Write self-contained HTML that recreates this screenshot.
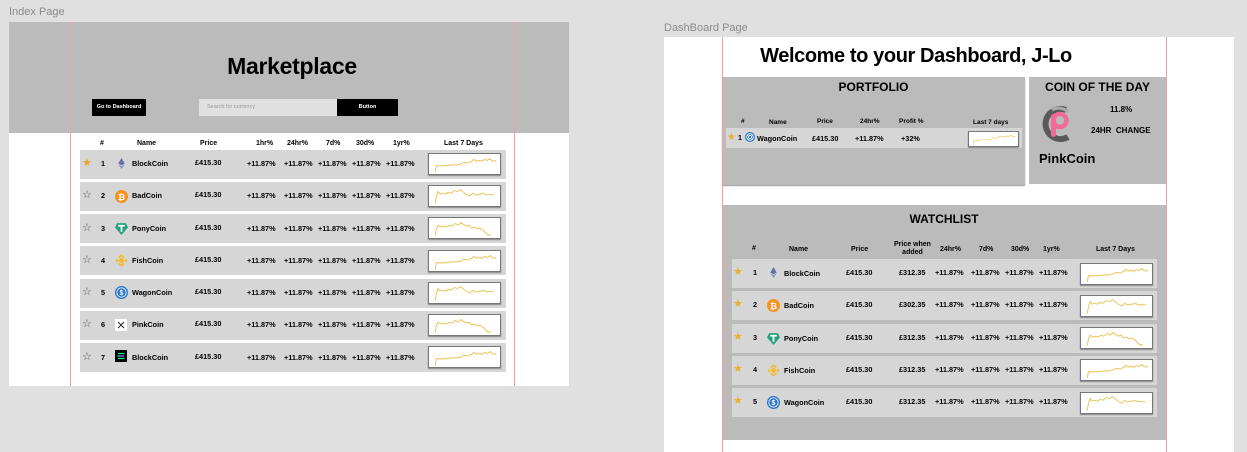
<!DOCTYPE html>
<html><head><meta charset="utf-8"><style>
*{margin:0;padding:0;box-sizing:border-box}
body{width:1247px;height:452px;background:#e0e0e0;position:relative;overflow:hidden;font-family:"Liberation Sans",Arial,sans-serif;color:#000}
.a{position:absolute}
.lbl{font-size:11px;color:#8a8a8a}
.t{position:absolute;font-size:7px;font-weight:bold;white-space:nowrap;line-height:1}
.col{position:absolute;font-size:7.3px;font-weight:bold;white-space:nowrap;line-height:32.3px}
.row{position:absolute;background:#d6d6d6}
.sp{position:absolute;background:#fff;border:1px solid #777;box-shadow:0 1px 1px #888}
.sp svg{display:block;width:100%;height:100%}
.red{position:absolute;width:1px;background:#f4a0a0}
.star{position:absolute;font-size:11px;line-height:1}
.ic{position:absolute;width:11px;height:11px}
</style></head><body>
<svg width="0" height="0" style="position:absolute"><defs>
<symbol id="s1" viewBox="0 0 72 22"><polyline fill="none" stroke="#e8b838" stroke-width="0.9" points="4,20 5,13 14,13 22,12 28,12 32,11 36,9 40,10 44,8 46,6 49,8 52,7 55,8 58,6 61,7 64,5 66,7 69,8 71,7"/></symbol>
<symbol id="s2" viewBox="0 0 72 22"><polyline fill="none" stroke="#e8b838" stroke-width="0.9" points="4,19 5,12 7,6 9,9 12,8 15,9 18,7 21,8 25,5 28,6 32,4 35,7 38,9 42,11 45,8 48,10 51,9 54,9 57,8 60,10 63,9 66,10 68,9"/></symbol>
<symbol id="s3" viewBox="0 0 72 22"><polyline fill="none" stroke="#e8b838" stroke-width="0.9" points="4,19 5,12 7,8 10,10 13,9 16,10 19,8 22,9 26,6 29,8 32,5 35,7 38,9 41,8 44,11 47,10 50,12 53,11 56,13 59,16 62,19 65,18"/></symbol>
</defs></svg>

<!-- INDEX PAGE -->
<div class="a lbl" style="left:9px;top:6px">Index Page</div>
<div class="a" style="left:9px;top:22px;width:560px;height:364px;background:#fff"></div>
<div class="a" style="left:9px;top:22px;width:560px;height:111px;background:#bbbbbb"></div>
<div class="a" style="left:9px;top:53px;width:566px;text-align:center;font-size:23px;font-weight:bold;letter-spacing:-0.3px">Marketplace</div>
<div class="a" style="left:92px;top:99px;width:54px;height:17px;background:#000;color:#fff;font-size:5.5px;font-weight:bold;text-align:center;line-height:17px">Go to Dashboard</div>
<div class="a" style="left:199px;top:99px;width:138px;height:17px;background:#e0e0e0;color:#999;font-size:5.5px;line-height:17px;padding-left:8px">Search for currency</div>
<div class="a" style="left:337px;top:99px;width:61px;height:17px;background:#000;color:#fff;font-size:5.5px;font-weight:bold;text-align:center;line-height:17px">Button</div>

<div class="t" style="left:100px;top:140px">#</div>
<div class="t" style="left:137px;top:140px">Name</div>
<div class="t" style="left:200px;top:140px">Price</div>
<div class="t" style="left:256px;top:140px">1hr%</div>
<div class="t" style="left:287px;top:140px">24hr%</div>
<div class="t" style="left:326px;top:140px">7d%</div>
<div class="t" style="left:356px;top:140px">30d%</div>
<div class="t" style="left:393px;top:140px">1yr%</div>
<div class="t" style="left:444px;top:140px">Last 7 Days</div>

<div class="row" style="left:80px;top:150px;width:426px;height:29px"></div>
<div class="row" style="left:80px;top:182px;width:426px;height:29px"></div>
<div class="row" style="left:80px;top:214px;width:426px;height:29px"></div>
<div class="row" style="left:80px;top:246px;width:426px;height:29px"></div>
<div class="row" style="left:80px;top:279px;width:426px;height:29px"></div>
<div class="row" style="left:80px;top:311px;width:426px;height:29px"></div>
<div class="row" style="left:80px;top:343px;width:426px;height:29px"></div>

<div class="col" style="left:82px;top:147px;font-size:11px;font-weight:normal;color:#555"><div style="color:#e8a530">★</div><div>☆</div><div>☆</div><div>☆</div><div>☆</div><div>☆</div><div>☆</div></div>
<div class="col" style="left:101px;top:148px"><div>1</div><div>2</div><div>3</div><div>4</div><div>5</div><div>6</div><div>7</div></div>
<div class="col" style="left:132px;top:148px"><div>BlockCoin</div><div>BadCoin</div><div>PonyCoin</div><div>FishCoin</div><div>WagonCoin</div><div>PinkCoin</div><div>BlockCoin</div></div>
<div class="col" style="left:195px;top:147px"><div>£415.30</div><div>£415.30</div><div>£415.30</div><div>£415.30</div><div>£415.30</div><div>£415.30</div><div>£415.30</div></div>
<div class="col" style="left:247px;top:148px"><div>+11.87%</div><div>+11.87%</div><div>+11.87%</div><div>+11.87%</div><div>+11.87%</div><div>+11.87%</div><div>+11.87%</div></div>
<div class="col" style="left:284px;top:148px"><div>+11.87%</div><div>+11.87%</div><div>+11.87%</div><div>+11.87%</div><div>+11.87%</div><div>+11.87%</div><div>+11.87%</div></div>
<div class="col" style="left:318px;top:148px"><div>+11.87%</div><div>+11.87%</div><div>+11.87%</div><div>+11.87%</div><div>+11.87%</div><div>+11.87%</div><div>+11.87%</div></div>
<div class="col" style="left:352px;top:148px"><div>+11.87%</div><div>+11.87%</div><div>+11.87%</div><div>+11.87%</div><div>+11.87%</div><div>+11.87%</div><div>+11.87%</div></div>
<div class="col" style="left:386px;top:148px"><div>+11.87%</div><div>+11.87%</div><div>+11.87%</div><div>+11.87%</div><div>+11.87%</div><div>+11.87%</div><div>+11.87%</div></div>

<svg class="ic" style="left:116px;top:158px" viewBox="0 0 12 12"><path d="M6 0 L9.5 6 L6 8 L2.5 6Z" fill="#6670a8"/><path d="M6 9 L9.5 7 L6 12 L2.5 7Z" fill="#8890c0"/></svg>
<svg class="ic" style="left:115px;top:190px;width:13px;height:13px" viewBox="0 0 12 12"><circle cx="6" cy="6" r="6" fill="#f39321"/><text x="6" y="9" font-size="8" font-weight="bold" fill="#fff" text-anchor="middle" font-family="Liberation Sans">₿</text></svg>
<svg class="ic" style="left:115px;top:222px;width:13px;height:13px" viewBox="0 0 12 12"><path d="M2 1 H10 L12 5 L6 12 L0 5Z" fill="#26a17b"/><path d="M3 3.5 H9 M6 3.5 V9" stroke="#fff" stroke-width="1.6"/></svg>
<svg class="ic" style="left:115px;top:254px;width:13px;height:13px" viewBox="0 0 12 12" fill="none" stroke="#f3ba2f" stroke-width="1.4"><path d="M6 1 L8.5 3.5 M6 1 L3.5 3.5 M1 6 L2.5 4.5 M11 6 L9.5 4.5 M6 11 L8.5 8.5 M6 11 L3.5 8.5 M1 6 L2.5 7.5 M11 6 L9.5 7.5"/><rect x="4.6" y="4.6" width="2.8" height="2.8" transform="rotate(45 6 6)" fill="#f3ba2f"/></svg>
<svg class="ic" style="left:115px;top:286px;width:13px;height:13px" viewBox="0 0 12 12"><circle cx="6" cy="6" r="6" fill="#2775ca"/><circle cx="6" cy="6" r="4.3" fill="none" stroke="#fff" stroke-width="0.8"/><text x="6" y="8.5" font-size="6.5" font-weight="bold" fill="#fff" text-anchor="middle" font-family="Liberation Sans">$</text></svg>
<svg class="ic" style="left:115px;top:319px;width:12px;height:12px" viewBox="0 0 12 12"><rect width="12" height="12" fill="#fff"/><path d="M3 3 L9 9 M9 3 L3 9" stroke="#222" stroke-width="1"/></svg>
<svg class="ic" style="left:115px;top:350px;width:12px;height:12px" viewBox="0 0 12 12"><rect width="12" height="12" fill="#000"/><path d="M3 3.5 H9.5 M2.5 6 H9 M3 8.5 H9.5" stroke="#14f195" stroke-width="1.3"/><path d="M5 6 H9" stroke="#9945ff" stroke-width="1.3"/></svg>

<div class="sp" style="left:428px;top:153px;width:73px;height:22px"><svg><use href="#s1"/></svg></div>
<div class="sp" style="left:428px;top:185px;width:73px;height:22px"><svg><use href="#s2"/></svg></div>
<div class="sp" style="left:428px;top:217px;width:73px;height:22px"><svg><use href="#s3"/></svg></div>
<div class="sp" style="left:428px;top:250px;width:73px;height:22px"><svg><use href="#s1"/></svg></div>
<div class="sp" style="left:428px;top:282px;width:73px;height:22px"><svg><use href="#s2"/></svg></div>
<div class="sp" style="left:428px;top:314px;width:73px;height:22px"><svg><use href="#s3"/></svg></div>
<div class="sp" style="left:428px;top:346px;width:73px;height:22px"><svg><use href="#s1"/></svg></div>

<div class="red" style="left:70px;top:22px;height:364px"></div>
<div class="red" style="left:514px;top:22px;height:364px"></div>

<!-- DASHBOARD PAGE -->
<div class="a lbl" style="left:664px;top:22px">DashBoard Page</div>
<div class="a" style="left:664px;top:37px;width:570px;height:415px;background:#fff"></div>
<div class="a" style="left:722px;top:45px;width:388px;text-align:center;font-size:20px;font-weight:bold;letter-spacing:-0.4px">Welcome to your Dashboard, J-Lo</div>

<div class="a" style="left:722px;top:77px;width:303px;height:108px;background:#bbbbbb;box-shadow:0 1px 1px #999"></div>
<div class="a" style="left:722px;top:80px;width:303px;text-align:center;font-size:12px;font-weight:bold">PORTFOLIO</div>
<div class="t" style="left:741px;top:119px;font-size:6.5px">#</div>
<div class="t" style="left:769px;top:120px;font-size:6.5px">Name</div>
<div class="t" style="left:817px;top:119px;font-size:6.5px">Price</div>
<div class="t" style="left:860px;top:119px;font-size:6.5px">24hr%</div>
<div class="t" style="left:899px;top:119px;font-size:6.5px">Profit %</div>
<div class="t" style="left:973px;top:120px;font-size:6.5px">Last 7 days</div>
<div class="row" style="left:726px;top:128px;width:296px;height:20px"></div>
<div class="star" style="left:727px;top:133px;color:#e8b030;font-size:10px">★</div>
<div class="t" style="left:738px;top:135px">1</div>
<svg class="ic" style="left:745px;top:132px;width:10px;height:10px" viewBox="0 0 12 12"><circle cx="6" cy="6" r="6" fill="#2775ca"/><circle cx="6" cy="6" r="4" fill="none" stroke="#fff" stroke-width="1"/><circle cx="6" cy="6" r="2" fill="none" stroke="#fff" stroke-width="1"/></svg>
<div class="t" style="left:757px;top:135px;font-size:7.3px">WagonCoin</div>
<div class="t" style="left:812px;top:135px;font-size:7.3px">£415.30</div>
<div class="t" style="left:855px;top:135px;font-size:7.3px">+11.87%</div>
<div class="t" style="left:901px;top:135px;font-size:7.3px">+32%</div>
<div class="sp" style="left:968px;top:131px;width:51px;height:16px"><svg><use href="#s1"/></svg></div>

<div class="a" style="left:1029px;top:77px;width:137px;height:107px;background:#bbbbbb"></div>
<div class="a" style="left:1029px;top:80px;width:137px;text-align:center;font-size:12px;font-weight:bold">COIN OF THE DAY</div>
<svg class="a" style="left:1040px;top:104px" width="36" height="38" viewBox="0 0 36 38"><path d="M26 6 A15 15 0 1 0 28 33" fill="none" stroke="#5a5a5a" stroke-width="6"/><path d="M28 8 A13 13 0 0 0 12 6" fill="none" stroke="#aaa" stroke-width="3"/><rect x="11" y="10" width="5" height="23" rx="2.5" fill="#f06a9a"/><circle cx="20" cy="16.5" r="6.5" fill="none" stroke="#f06a9a" stroke-width="4.5"/></svg>
<div class="t" style="left:1110px;top:106px;font-size:8px">11.8%</div>
<div class="t" style="left:1091px;top:127px;font-size:8px">24HR &nbsp;CHANGE</div>
<div class="a" style="left:1039px;top:151px;font-size:13px;font-weight:bold">PinkCoin</div>

<div class="a" style="left:722px;top:205px;width:444px;height:235px;background:#bbbbbb"></div>
<div class="a" style="left:722px;top:212px;width:444px;text-align:center;font-size:12px;font-weight:bold">WATCHLIST</div>
<div class="t" style="left:752px;top:245px">#</div>
<div class="t" style="left:789px;top:246px">Name</div>
<div class="t" style="left:851px;top:246px">Price</div>
<div class="t" style="left:894px;top:241px;text-align:center;line-height:8px">Price when<br>added</div>
<div class="t" style="left:940px;top:246px">24hr%</div>
<div class="t" style="left:979px;top:246px">7d%</div>
<div class="t" style="left:1011px;top:246px">30d%</div>
<div class="t" style="left:1043px;top:246px">1yr%</div>
<div class="t" style="left:1096px;top:246px">Last 7 Days</div>

<div class="row" style="left:732px;top:259px;width:425px;height:29px"></div>
<div class="row" style="left:732px;top:291px;width:425px;height:29px"></div>
<div class="row" style="left:732px;top:324px;width:425px;height:29px"></div>
<div class="row" style="left:732px;top:356px;width:425px;height:29px"></div>
<div class="row" style="left:732px;top:388px;width:425px;height:29px"></div>

<div class="col" style="left:733px;top:256px;font-size:11px;font-weight:normal;color:#e8b030"><div>★</div><div>★</div><div>★</div><div>★</div><div>★</div></div>
<div class="col" style="left:753px;top:257px"><div>1</div><div>2</div><div>3</div><div>4</div><div>5</div></div>
<div class="col" style="left:784px;top:258px"><div>BlockCoin</div><div>BadCoin</div><div>PonyCoin</div><div>FishCoin</div><div>WagonCoin</div></div>
<div class="col" style="left:846px;top:257px"><div>£415.30</div><div>£415.30</div><div>£415.30</div><div>£415.30</div><div>£415.30</div></div>
<div class="col" style="left:899px;top:257px"><div>£312.35</div><div>£302.35</div><div>£312.35</div><div>£312.35</div><div>£312.35</div></div>
<div class="col" style="left:935px;top:257px"><div>+11.87%</div><div>+11.87%</div><div>+11.87%</div><div>+11.87%</div><div>+11.87%</div></div>
<div class="col" style="left:971px;top:257px"><div>+11.87%</div><div>+11.87%</div><div>+11.87%</div><div>+11.87%</div><div>+11.87%</div></div>
<div class="col" style="left:1005px;top:257px"><div>+11.87%</div><div>+11.87%</div><div>+11.87%</div><div>+11.87%</div><div>+11.87%</div></div>
<div class="col" style="left:1039px;top:257px"><div>+11.87%</div><div>+11.87%</div><div>+11.87%</div><div>+11.87%</div><div>+11.87%</div></div>

<svg class="ic" style="left:768px;top:267px" viewBox="0 0 12 12"><path d="M6 0 L9.5 6 L6 8 L2.5 6Z" fill="#6670a8"/><path d="M6 9 L9.5 7 L6 12 L2.5 7Z" fill="#8890c0"/></svg>
<svg class="ic" style="left:767px;top:299px;width:13px;height:13px" viewBox="0 0 12 12"><circle cx="6" cy="6" r="6" fill="#f39321"/><text x="6" y="9" font-size="8" font-weight="bold" fill="#fff" text-anchor="middle" font-family="Liberation Sans">₿</text></svg>
<svg class="ic" style="left:767px;top:332px;width:13px;height:13px" viewBox="0 0 12 12"><path d="M2 1 H10 L12 5 L6 12 L0 5Z" fill="#26a17b"/><path d="M3 3.5 H9 M6 3.5 V9" stroke="#fff" stroke-width="1.6"/></svg>
<svg class="ic" style="left:767px;top:364px;width:13px;height:13px" viewBox="0 0 12 12" fill="none" stroke="#f3ba2f" stroke-width="1.4"><path d="M6 1 L8.5 3.5 M6 1 L3.5 3.5 M1 6 L2.5 4.5 M11 6 L9.5 4.5 M6 11 L8.5 8.5 M6 11 L3.5 8.5 M1 6 L2.5 7.5 M11 6 L9.5 7.5"/><rect x="4.6" y="4.6" width="2.8" height="2.8" transform="rotate(45 6 6)" fill="#f3ba2f"/></svg>
<svg class="ic" style="left:767px;top:396px;width:13px;height:13px" viewBox="0 0 12 12"><circle cx="6" cy="6" r="6" fill="#2775ca"/><circle cx="6" cy="6" r="4.3" fill="none" stroke="#fff" stroke-width="0.8"/><text x="6" y="8.5" font-size="6.5" font-weight="bold" fill="#fff" text-anchor="middle" font-family="Liberation Sans">$</text></svg>

<div class="sp" style="left:1080px;top:263px;width:73px;height:22px"><svg><use href="#s1"/></svg></div>
<div class="sp" style="left:1080px;top:295px;width:73px;height:22px"><svg><use href="#s2"/></svg></div>
<div class="sp" style="left:1080px;top:327px;width:73px;height:22px"><svg><use href="#s3"/></svg></div>
<div class="sp" style="left:1080px;top:359px;width:73px;height:22px"><svg><use href="#s1"/></svg></div>
<div class="sp" style="left:1080px;top:392px;width:73px;height:22px"><svg><use href="#s2"/></svg></div>

<div class="red" style="left:722px;top:37px;height:415px"></div>
<div class="red" style="left:1166px;top:37px;height:415px"></div>
</body></html>
